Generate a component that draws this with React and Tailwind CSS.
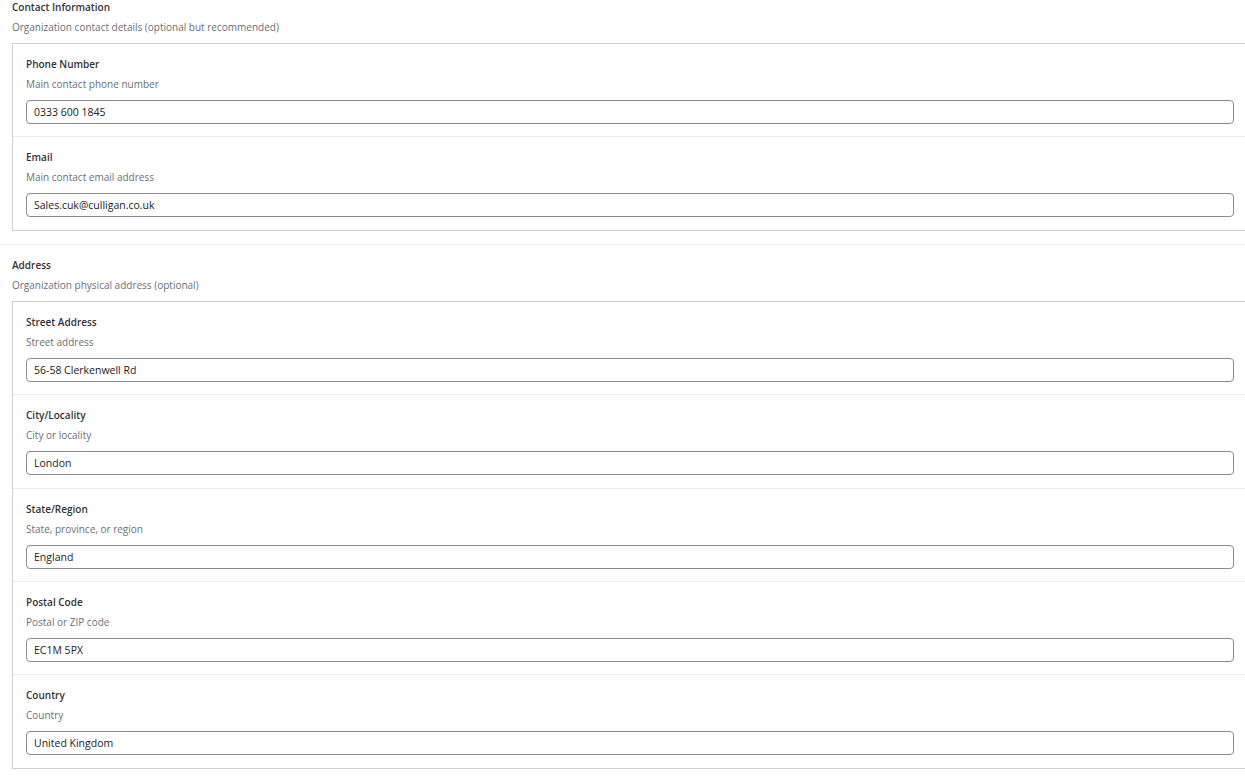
import { useState } from 'react';

const sections = [
  {
    title: 'Contact Information',
    description: 'Organization contact details (optional but recommended)',
    fields: [
      { label: 'Phone Number', hint: 'Main contact phone number', value: '0333 600 1845' },
      { label: 'Email', hint: 'Main contact email address', value: 'Sales.cuk@culligan.co.uk' },
    ],
  },
  {
    title: 'Address',
    description: 'Organization physical address (optional)',
    fields: [
      { label: 'Street Address', hint: 'Street address', value: '56-58 Clerkenwell Rd' },
      { label: 'City/Locality', hint: 'City or locality', value: 'London' },
      { label: 'State/Region', hint: 'State, province, or region', value: 'England' },
      { label: 'Postal Code', hint: 'Postal or ZIP code', value: 'EC1M 5PX' },
      { label: 'Country', hint: 'Country', value: 'United Kingdom' },
    ],
  },
];

const Field = ({ field, last }) => {
  const [value, setValue] = useState(field.value);

  return (
    <div className={`px-[13px] pt-[13px] pb-[12.4px] ${last ? '' : 'border-b border-[#ececec]'}`}>
      <div className="text-[10px] leading-[14px] font-semibold text-[#333]">{field.label}</div>
      <div className="mt-[6px] text-[10px] leading-[14px] text-[#6b6f76]">{field.hint}</div>
      <input
        value={value}
        onChange={e => setValue(e.target.value)}
        className="mt-[9px] block w-full h-6 px-[7px] rounded border border-[#8c8c8c] bg-white text-[10.5px] text-[#222] outline-none"
      />
    </div>
  );
};

export default function App() {
  return (
    <div className="w-[1245px] h-[783px] overflow-hidden bg-white" style={{ fontFamily: '"Open Sans", "Noto Sans", sans-serif' }}>
      {sections.map((section, idx) => (
        <div
          key={section.title}
          className={idx === 0 ? 'pb-[13px]' : 'border-t border-[#ececec] pt-[13px] pb-[13px]'}
        >
          <div className="pl-3 text-[10px] leading-[14px] font-semibold text-[#333]">{section.title}</div>
          <div className="pl-3 mt-[6px] text-[10px] leading-[14px] text-[#6b6f76]">{section.description}</div>
          <div className="ml-3 mt-[9px] w-[1236px] border border-[#d0d0d0]">
            {section.fields.map((field, i) => (
              <Field key={field.label} field={field} last={i === section.fields.length - 1} />
            ))}
          </div>
        </div>
      ))}
    </div>
  );
}
